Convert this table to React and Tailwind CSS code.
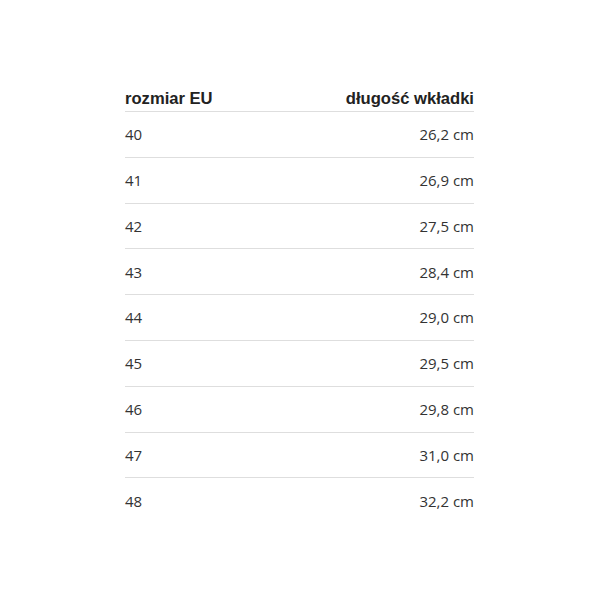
export default function App() {
  const rows = [
    ["40", "26,2 cm"],
    ["41", "26,9 cm"],
    ["42", "27,5 cm"],
    ["43", "28,4 cm"],
    ["44", "29,0 cm"],
    ["45", "29,5 cm"],
    ["46", "29,8 cm"],
    ["47", "31,0 cm"],
    ["48", "32,2 cm"],
  ];
  return (
    <div className="w-[600px] h-[600px] bg-white pt-[87px] pl-[125px]">
      <div className="w-[349px]">
        <div
          className="flex justify-between items-center h-[25px] border-b border-[#dedede] text-[16.6px] font-bold text-[#222]"
          style={{ fontFamily: "'Liberation Sans', Arial, sans-serif" }}
        >
          <span>rozmiar EU</span>
          <span>długość wkładki</span>
        </div>
        {rows.map(([a, b], i) => (
          <div
            key={a}
            className={`flex justify-between items-center h-[45.8px] text-[15px] text-[#333] ${i < rows.length - 1 ? "border-b border-[#dedede]" : ""}`}
            style={{ fontFamily: "'Open Sans', sans-serif" }}
          >
            <span>{a}</span>
            <span>{b}</span>
          </div>
        ))}
      </div>
    </div>
  );
}
